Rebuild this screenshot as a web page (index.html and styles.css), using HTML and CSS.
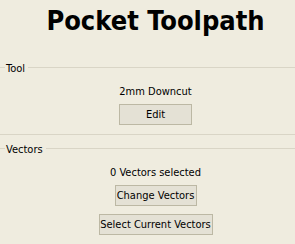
FILE: index.html
```html
<!DOCTYPE html>
<html>
<head>
<meta charset="utf-8">
<link rel="stylesheet" href="styles.css">
</head>
<body>
<h1 class="title">Pocket Toolpath</h1>
<section class="group group-tool">
  <div class="legend"><span class="lead"></span><span class="label">Tool</span><span class="rule"></span></div>
  <div class="content">
    <div class="text">2mm Downcut</div>
    <button class="btn btn-edit">Edit</button>
  </div>
</section>
<section class="group group-vectors">
  <div class="legend"><span class="lead"></span><span class="label">Vectors</span><span class="rule"></span></div>
  <div class="content">
    <div class="text">0 Vectors selected</div>
    <button class="btn btn-change">Change Vectors</button>
    <button class="btn btn-select">Select Current Vectors</button>
  </div>
</section>
</body>
</html>
```
FILE: styles.css
```css
html, body {
  margin: 0;
  padding: 0;
  background: #efecdf;
  width: 295px;
  height: 244px;
  overflow: hidden;
  font-family: "DejaVu Sans Condensed", "DejaVu Sans", sans-serif;
  font-stretch: condensed;
  font-size: 11px;
  color: #000;
}
.title {
  margin: 0;
  padding: 4px 0 0 16px;
  height: 56px;
  text-align: center;
  font-family: "DejaVu Sans Condensed", "DejaVu Sans", sans-serif;
  font-stretch: condensed;
  font-weight: bold;
  font-size: 27px;
  line-height: 34px;
}
.group-tool {
  border-bottom: 1px solid #d9d5c6;
  height: 74px;
}
.legend {
  display: flex;
  align-items: flex-start;
  height: 15px;
}
.lead {
  width: 5px;
  height: 1px;
  margin-top: 7px;
  background: #d9d5c6;
}
.label {
  margin-top: 2px;
  line-height: 13px;
  padding: 0 3px 0 1px;
}
.rule {
  flex: 1;
  height: 1px;
  margin-top: 7px;
  background: #d9d5c6;
}
.content {
  display: flex;
  flex-direction: column;
  align-items: center;
  padding-left: 16px;
}
.text {
  margin-top: 10px;
  height: 13px;
  line-height: 13px;
}
.btn {
  font: inherit;
  color: #000;
  background: #e4e1d5;
  border: 1px solid #bcb8a4;
  border-radius: 0;
  height: 21px;
  padding: 0;
  margin-top: 6px;
}
.btn-edit {
  width: 73px;
}
.btn-change {
  width: 82px;
}
.btn-select {
  width: 114px;
}
.group-vectors {
  margin-top: 6px;
}
.group-vectors .btn + .btn {
  margin-top: 8px;
}
```
